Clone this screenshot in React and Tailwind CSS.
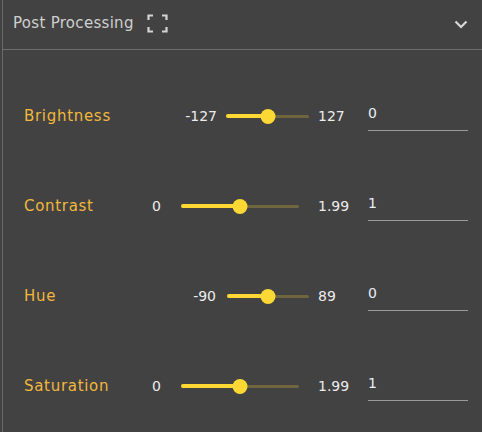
import React from "react";

const rows = [
  { label: "Brightness", min: "-127", max: "127", value: "0", gapL: 9, w: 83, pos: 0.5, gapR: 9 },
  { label: "Contrast", min: "0", max: "1.99", value: "1", gapL: 20, w: 118, pos: 0.5, gapR: 19 },
  { label: "Hue", min: "-90", max: "89", value: "0", gapL: 11, w: 82, pos: 0.5, gapR: 9 },
  { label: "Saturation", min: "0", max: "1.99", value: "1", gapL: 20, w: 118, pos: 0.5, gapR: 19 },
];

const Slider = ({ w, pos }) => (
  <div className="relative h-[14px] flex items-center" style={{ width: w }}>
    <div className="absolute left-0 right-0 h-[3px] rounded-full bg-[#6f663f]" />
    <div
      className="absolute left-0 h-[4px] rounded-full bg-[#fdd835]"
      style={{ width: `${pos * 100}%` }}
    />
    <div
      className="absolute w-[15px] h-[15px] rounded-full bg-[#fdd835] -translate-x-1/2"
      style={{ left: `${pos * 100}%` }}
    />
  </div>
);

const Row = ({ r }) => (
  <div className="flex items-center h-[90px] pl-[21px] pr-[14px]">
    <span className="flex-1 text-[#f2b73c] text-[15px] tracking-[0.7px]">{r.label}</span>
    <span className="text-[#ececec] text-[14px]" style={{ marginRight: r.gapL }}>
      {r.min}
    </span>
    <Slider w={r.w} pos={r.pos} />
    <span
      className="text-[#ececec] text-[14px] w-[50px]"
      style={{ marginLeft: r.gapR }}
    >
      {r.max}
    </span>
    <div className="w-[100px] flex flex-col">
      <span className="text-[#e8eef4] text-[14px] leading-[24px]">{r.value}</span>
      <div className="h-px bg-[#9a9a9a] mt-[5px]" />
    </div>
  </div>
);

export default function App() {
  return (
    <div
      className="w-[482px] h-[432px] bg-[#424242] pl-[2px] overflow-hidden"
      style={{ fontFamily: "'DejaVu Sans', 'Open Sans', sans-serif" }}
    >
      <div className="h-full border-l border-[#6a6a6a] flex flex-col">
        <div className="h-[49px] flex items-center pl-[10px] pr-[14px] border-b border-[#6e6e6e] box-content">
          <span className="text-[#cfcfcf] text-[15px] tracking-[0.3px] -mt-[2px]">Post Processing</span>
          <svg
            className="ml-[13px] -mt-[2px]"
            width="21"
            height="19"
            viewBox="0 0 21 19"
            fill="none"
            stroke="#d4d4d4"
            strokeWidth="2.2"
          >
            <path d="M1.5 6V1.5H6M15 1.5H19.5V6M19.5 13V17.5H15M6 17.5H1.5V13" />
          </svg>
          <div className="flex-1" />
          <svg width="14" height="9" viewBox="0 0 14 9" fill="none" stroke="#d8d8d8" strokeWidth="2.2">
            <path d="M1.5 1.5L7 7L12.5 1.5" />
          </svg>
        </div>
        <div className="pt-[21px]">
          {rows.map((r) => (
            <Row key={r.label} r={r} />
          ))}
        </div>
      </div>
    </div>
  );
}
